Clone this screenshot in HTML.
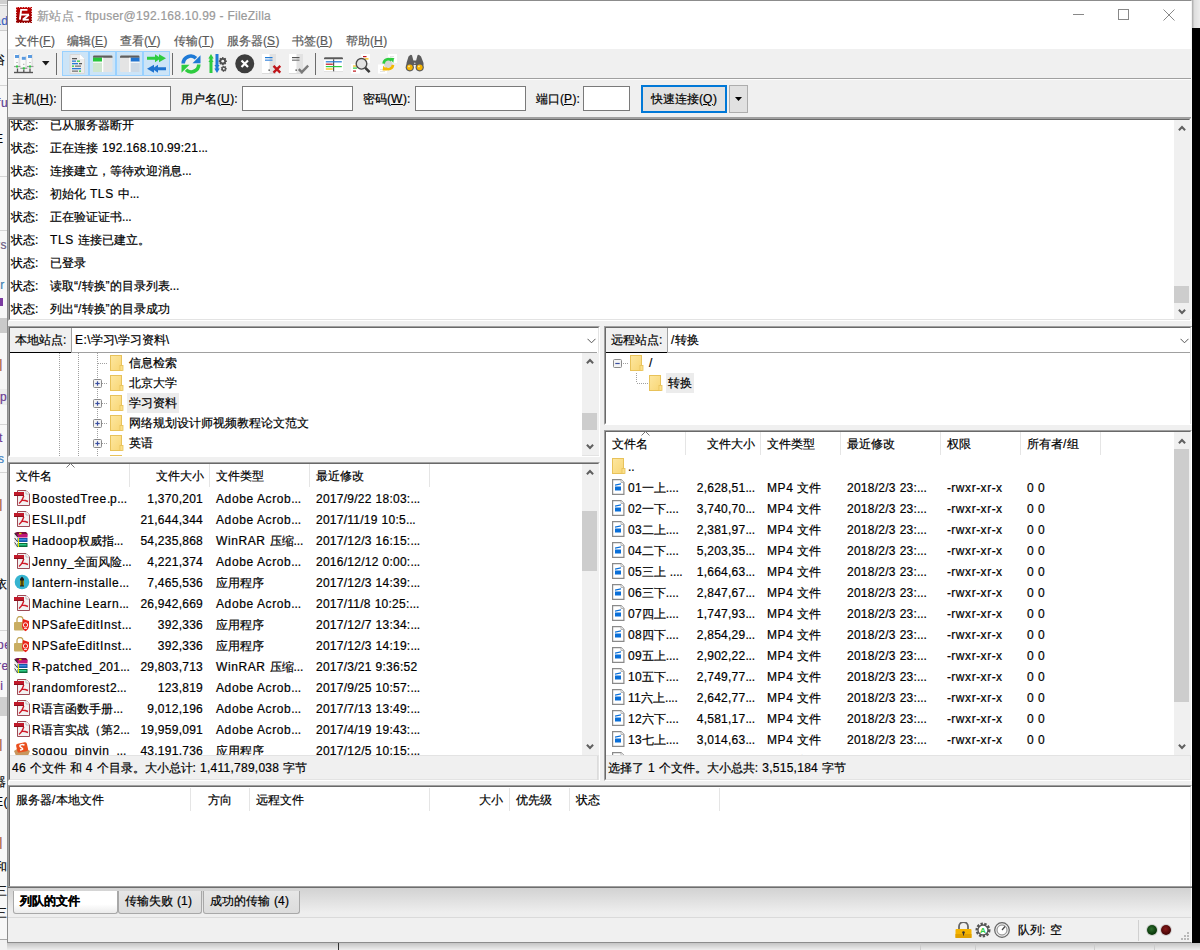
<!DOCTYPE html><html><head><meta charset="utf-8"><style>
*{box-sizing:border-box}
body{margin:0;width:1200px;height:950px;overflow:hidden;position:relative;background:#fafafa;font-family:"Liberation Sans",sans-serif;font-size:12px;color:#000}
.abs{position:absolute}
.L{letter-spacing:0.6px}.D{letter-spacing:0.25px}.S{letter-spacing:0.6px}.P{letter-spacing:-0.15px}
.t{position:absolute;white-space:nowrap;line-height:14px;-webkit-text-stroke-width:0.2px}
.sb{position:absolute;background:#f0f0f0}
.win{position:absolute;left:7px;top:0;width:1185px;height:943px;background:#f0f0f0;border:1px solid #8c8c8c;border-right-color:#f4f4f4}
</style></head><body>

<div class="abs" style="left:1192px;top:0;width:8px;height:28px;background:linear-gradient(90deg,#a8a8a8,#dedede 30%,#ececec)"></div>
<div class="abs" style="left:1192px;top:28px;width:8px;height:915px;background:#000"></div>
<div class="abs" style="left:0;top:943px;width:1200px;height:7px;background:linear-gradient(#c4c4c4,#eeeeee)"></div>
<div class="abs" style="left:338px;top:943px;width:1px;height:7px;background:#333"></div>
<div class="abs" style="left:920px;top:943px;width:1px;height:7px;background:#ccc"></div>
<div class="abs" style="left:975px;top:943px;width:1px;height:7px;background:#ccc"></div>
<div class="abs" style="left:1094px;top:943px;width:1px;height:7px;background:#ccc"></div>
<div class="abs" style="left:1154px;top:943px;width:1px;height:7px;background:#ccc"></div>
<div class="abs" style="left:0;top:0;width:7px;height:950px;overflow:hidden;background:#f7f7f7"><div class="abs" style="left:0;top:0px;width:7px;height:4px;background:#d0d0d0"></div><div class="abs" style="left:0;top:5px;width:7px;height:1px;background:#c8c8c8"></div><div class="abs" style="left:0;top:6px;width:7px;height:24px;background:#ebebeb"></div><div class="abs" style="left:0;top:30px;width:7px;height:1px;background:#cdcdcd"></div><div class="t" style="left:-6px;top:14px;color:#3a5fc0"><span class="L">ad</span></div><div class="t" style="left:-7px;top:53px;color:#000">浴</div><div class="abs" style="left:0;top:85px;width:7px;height:1px;background:#d4d4d4"></div><div class="t" style="left:-3px;top:96px;color:#5a3a90"><span class="L">fu</span></div><div class="t" style="left:-12px;top:132px;color:#000">~<span class="L">E</span></div><div class="abs" style="left:0;top:176px;width:7px;height:1px;background:#d4d4d4"></div><div class="abs" style="left:0;top:230px;width:7px;height:1px;background:#d4d4d4"></div><div class="t" style="left:-6px;top:238px;color:#6a5a80"><span class="L">ys</span></div><div class="t" style="left:-3px;top:278px;color:#4080b0"><span class="L">ir</span></div><div class="abs" style="left:0;top:298px;width:3px;height:8px;background:#7a3aa0"></div><div class="abs" style="left:0;top:318px;width:7px;height:15px;background:#cacaca"></div><div class="t" style="left:-5px;top:357px;color:#a05030"><span class="D">-</span>|</div><div class="abs" style="left:0;top:389px;width:7px;height:16px;background:#ececec"></div><div class="t" style="left:0px;top:390px;color:#6a3a90"><span class="L">p</span></div><div class="abs" style="left:0;top:424px;width:7px;height:1px;background:#d4d4d4"></div><div class="t" style="left:-1px;top:431px;color:#6a3a90"><span class="L">t</span></div><div class="t" style="left:-2px;top:452px;color:#4080c0"><span class="L">s</span></div><div class="abs" style="left:0;top:472px;width:7px;height:1px;background:#d4d4d4"></div><div class="t" style="left:-5px;top:497px;color:#a05030"><span class="D">-</span>|</div><div class="t" style="left:-8px;top:577px;color:#000"><span class="P">.</span>依</div><div class="abs" style="left:0;top:630px;width:7px;height:1px;background:#d4d4d4"></div><div class="t" style="left:-3px;top:638px;color:#6a3a90"><span class="L">pe</span></div><div class="t" style="left:-3px;top:659px;color:#6a3a90"><span class="L">re</span></div><div class="t" style="left:-3px;top:679px;color:#6a3a90"><span class="P">.</span><span class="L">i</span></div><div class="abs" style="left:0;top:697px;width:7px;height:19px;background:#cfcfcf"></div><div class="t" style="left:-5px;top:737px;color:#a05030"><span class="D">-</span>|</div><div class="t" style="left:-6px;top:775px;color:#000">器</div><div class="t" style="left:-5px;top:795px;color:#000"><span class="L">E</span>(</div><div class="t" style="left:-5px;top:835px;color:#a05030"><span class="D">-</span>|</div><div class="t" style="left:-5px;top:860px;color:#000">和</div><div class="t" style="left:-5px;top:884px;color:#000">三</div><div class="t" style="left:-5px;top:906px;color:#000">三</div><div class="abs" style="left:0;top:939px;width:7px;height:1px;background:#a8a8a8"></div><div class="abs" style="left:0;top:940px;width:7px;height:10px;background:#f2f2f2"></div></div>
<div class="win"></div>
<div class="abs" style="left:8px;top:1px;width:1183px;height:48px;background:#fff"></div>
<svg class="abs" style="left:16px;top:7px" width="16" height="16" viewBox="0 0 16 16"><defs><linearGradient id="fzg" x1="0" y1="0" x2="0" y2="1"><stop offset="0" stop-color="#c00000"/><stop offset="1" stop-color="#900000"/></linearGradient></defs><rect x="0" y="0" width="16" height="16" fill="url(#fzg)"/><rect x="0.5" y="0.5" width="15" height="15" fill="none" stroke="#f4d8d8" stroke-width="1" stroke-dasharray="1 1.6"/><path d="M3.9 12.6 L5.1 2.9 H11.4" stroke="#fff" stroke-width="1.9" fill="none"/><path d="M4.7 7.6 H13" stroke="#fff" stroke-width="1.8"/><path d="M12.8 7.8 L7.1 12.6" stroke="#fff" stroke-width="2.1"/><path d="M6.6 12.7 H12.8" stroke="#fff" stroke-width="1.8"/></svg>
<div class="t nowrap-ls" style="left:37px;top:9px;color:#9a9a9a;letter-spacing:0.25px">新站点 - ftpuser@192.168.10.99 - FileZilla</div>
<div class="abs" style="left:1073px;top:14px;width:11px;height:1px;background:#888"></div>
<div class="abs" style="left:1118px;top:9px;width:11px;height:11px;border:1px solid #888"></div>
<svg class="abs" style="left:1163px;top:9px" width="12" height="12"><path d="M0.5 0.5 L11.5 11.5 M11.5 0.5 L0.5 11.5" stroke="#888" stroke-width="1"/></svg>
<div class="t" style="left:15px;top:34px;color:#5a5a5a">文件(<u><span class="L">F</span></u>)</div>
<div class="t" style="left:67px;top:34px;color:#5a5a5a">编辑(<u><span class="L">E</span></u>)</div>
<div class="t" style="left:120px;top:34px;color:#5a5a5a">查看(<u><span class="L">V</span></u>)</div>
<div class="t" style="left:174px;top:34px;color:#5a5a5a">传输(<u><span class="L">T</span></u>)</div>
<div class="t" style="left:227px;top:34px;color:#5a5a5a">服务器(<u><span class="L">S</span></u>)</div>
<div class="t" style="left:292px;top:34px;color:#5a5a5a">书签(<u><span class="L">B</span></u>)</div>
<div class="t" style="left:346px;top:34px;color:#5a5a5a">帮助(<u><span class="L">H</span></u>)</div>
<div class="abs" style="left:8px;top:78px;width:1183px;height:1px;background:#a0a0a0"></div>
<div class="abs" style="left:8px;top:79px;width:1183px;height:1px;background:#fdfdfd"></div>
<svg class="abs" style="left:14px;top:54px" width="20" height="20" viewBox="0 0 20 20"><rect x="0" y="0" width="6" height="12.5" fill="#fbfbfb"/><rect x="4.5" y="0" width="1.5" height="12.5" fill="#e2e2e2"/><rect x="1" y="1" width="4" height="3" fill="#5b9be0"/><rect x="2.5" y="8" width="1" height="1" fill="#888"/><rect x="-0.5" y="11.9" width="7" height="1.2" fill="#9a9a9a"/><rect x="2" y="11.5" width="2" height="2" fill="#2ecc40"/><rect x="13" y="0" width="6" height="12.5" fill="#fbfbfb"/><rect x="17.5" y="0" width="1.5" height="12.5" fill="#e2e2e2"/><rect x="14" y="1" width="4" height="3" fill="#5b9be0"/><rect x="15.5" y="8" width="1" height="1" fill="#888"/><rect x="12.5" y="11.9" width="7" height="1.2" fill="#9a9a9a"/><rect x="15" y="11.5" width="2" height="2" fill="#2ecc40"/><rect x="6.8" y="1.8" width="6" height="12.5" fill="#fbfbfb"/><rect x="11.3" y="1.8" width="1.5" height="12.5" fill="#e2e2e2"/><rect x="7.8" y="2.8" width="4" height="3" fill="#5b9be0"/><rect x="9.3" y="9.8" width="1" height="1" fill="#888"/><rect x="6.3" y="13.700000000000001" width="7" height="1.2" fill="#9a9a9a"/><rect x="8.8" y="13.3" width="2" height="2" fill="#2ecc40"/><path d="M3.5 14.5 V18 M9.8 15.5 V18 M16 14.5 V18" stroke="#555" stroke-width="1.3"/><rect x="0" y="17.8" width="19" height="1.4" fill="#555"/></svg>
<svg class="abs" style="left:42px;top:61px" width="8" height="5"><path d="M0 0 H7.5 L3.75 4.5Z" fill="#1a1a1a"/></svg>
<div class="abs" style="left:56px;top:53px;width:1px;height:22px;background:#6b6b6b"></div>
<div class="abs" style="left:62px;top:51px;width:108px;height:25px;background:#cce4f7;border:1px solid #99d1ff"></div>
<div class="abs" style="left:88px;top:52px;width:2px;height:23px;background:#99d1ff"></div>
<div class="abs" style="left:115px;top:52px;width:2px;height:23px;background:#99d1ff"></div>
<div class="abs" style="left:142px;top:52px;width:2px;height:23px;background:#99d1ff"></div>
<svg class="abs" style="left:68px;top:54px" width="18" height="20" viewBox="0 0 18 20"><path d="M2 0.5 H12 L16.5 5 V19.5 H2Z" fill="#ececec" stroke="#d8d8d8"/><path d="M12 0.5 V5 H16.5" fill="#fff"/>
<rect x="4" y="4" width="5" height="1.3" fill="#555"/><rect x="4" y="6.5" width="4" height="1.3" fill="#2a7ad5"/><rect x="9" y="6.5" width="3" height="1.3" fill="#2ecc40"/>
<rect x="4" y="9" width="6" height="1.3" fill="#2a7ad5"/><rect x="11" y="9" width="3" height="1.3" fill="#555"/><rect x="4" y="11.5" width="2" height="1.3" fill="#2ecc40"/><rect x="7" y="11.5" width="6" height="1.3" fill="#777"/>
<rect x="4" y="14" width="9" height="1.3" fill="#2a7ad5"/><rect x="4" y="16.5" width="6" height="1.3" fill="#777"/><rect x="11" y="16.5" width="2" height="1.3" fill="#2ecc40"/></svg>
<svg class="abs" style="left:93px;top:55px" width="20" height="17" viewBox="0 0 20 17"><rect x="0" y="0.5" width="19.5" height="16.5" rx="1.2" fill="#e4e4e4"/><path d="M0 2.7 V1.7 Q0 0.5 1.2 0.5 H18.3 Q19.5 0.5 19.5 1.7 V2.7Z" fill="#5e5e5e"/><rect x="0" y="2.7" width="9" height="4" fill="#25c73a"/><rect x="0" y="6.7" width="9" height="1.1" fill="#fff"/><rect x="0" y="7.8" width="9" height="9.2" fill="#cfe6cf"/><rect x="9" y="2.7" width="1.3" height="14.3" fill="#fff"/></svg>
<svg class="abs" style="left:120px;top:55px" width="20" height="17" viewBox="0 0 20 17"><rect x="0" y="0.5" width="19.5" height="16.5" rx="1.2" fill="#e4e4e4"/><path d="M0 2.7 V1.7 Q0 0.5 1.2 0.5 H18.3 Q19.5 0.5 19.5 1.7 V2.7Z" fill="#5e5e5e"/><rect x="10.5" y="2.7" width="9" height="4" fill="#1f73d0"/><rect x="10.5" y="6.7" width="9" height="1.1" fill="#fff"/><rect x="10.5" y="7.8" width="9" height="9.2" fill="#cdd9e5"/><rect x="9.2" y="2.7" width="1.3" height="14.3" fill="#fff"/></svg>
<svg class="abs" style="left:147px;top:54px" width="20" height="19" viewBox="0 0 20 19"><path d="M0 2.8 H8 V0.3 L12 3 V0.3 L19 4.3 L12 8.3 V5.6 L8 8.3 V5.8 H0Z" fill="#2ecc40"/><path d="M19 13.2 H11 V10.7 L7 13.4 V10.7 L0 14.7 L7 18.7 V16 L11 18.7 V16.2 H19Z" fill="#1f73d0"/></svg>
<div class="abs" style="left:172px;top:53px;width:1px;height:22px;background:#6b6b6b"></div>
<svg class="abs" style="left:181px;top:54px" width="20" height="20" viewBox="0 0 20 20">
<path d="M2.2 9.5 A7.6 7.6 0 0 1 15 4.2" stroke="#1f7ad6" stroke-width="3.6" fill="none"/><path d="M11.5 9.3 L19.5 9.3 L19.5 1.3Z" fill="#1f7ad6"/>
<path d="M17.8 10.5 A7.6 7.6 0 0 1 5 15.8" stroke="#2ecc40" stroke-width="3.6" fill="none"/><path d="M8.5 10.7 L0.5 10.7 L0.5 18.7Z" fill="#2ecc40"/></svg>
<svg class="abs" style="left:208px;top:54px" width="20" height="20" viewBox="0 0 20 20"><path d="M1.5 19 V4.5 H0.3 L3 0 L5.7 4.5 H4.5 V19Z" fill="#2ecc40"/><path d="M0.3 8 L3 5 L5.7 8Z" fill="#2ecc40"/><path d="M7.5 0 V14.5 H6.3 L9 19 L11.7 14.5 H10.5 V0Z" fill="#1f7ad6"/><path d="M6.3 11 L9 14 L11.7 11Z" fill="#1f7ad6"/><polygon points="18.80,7.20 17.46,8.30 17.63,10.03 15.90,9.86 14.80,11.20 13.70,9.86 11.97,10.03 12.14,8.30 10.80,7.20 12.14,6.10 11.97,4.37 13.70,4.54 14.80,3.20 15.90,4.54 17.63,4.37 17.46,6.10" fill="#4a4a4a" stroke="#4a4a4a" stroke-width="0.8" stroke-linejoin="round"/><circle cx="14.8" cy="7.2" r="1.40" fill="#f0f0f0"/><polygon points="18.70,14.80 17.68,15.71 17.61,17.07 16.26,16.84 15.15,17.63 14.50,16.43 13.19,16.06 13.71,14.80 13.19,13.54 14.50,13.17 15.15,11.97 16.26,12.76 17.61,12.53 17.68,13.89" fill="#4a4a4a" stroke="#4a4a4a" stroke-width="0.6" stroke-linejoin="round"/><circle cx="15.8" cy="14.8" r="1.01" fill="#f0f0f0"/></svg>
<svg class="abs" style="left:235px;top:54px" width="20" height="20" viewBox="0 0 20 20"><circle cx="9.75" cy="9.75" r="9.5" fill="#3d3d3d"/><path d="M6.5 6.5 L13 13 M13 6.5 L6.5 13" stroke="#fff" stroke-width="2.2"/></svg>
<svg class="abs" style="left:262px;top:54px" width="20" height="20" viewBox="0 0 20 20"><rect x="0" y="0" width="14" height="19" fill="#ffffff"/><rect x="7.5" y="0" width="6.5" height="19" fill="#e2e2e2"/><rect x="0" y="19" width="14" height="0.8" fill="#d6d6d6"/><rect x="3" y="3" width="7.5" height="1.2" fill="#1f7ad6"/><rect x="3" y="5.5" width="7.5" height="1.4" fill="#5a9ae0"/><rect x="6.5" y="15.5" width="1.3" height="1.3" fill="#333"/><path d="M11.5 11.8 L18.3 18.6 M18.3 11.8 L11.5 18.6" stroke="#c0161b" stroke-width="2.4"/></svg>
<svg class="abs" style="left:289px;top:54px" width="20" height="20" viewBox="0 0 20 20"><rect x="0" y="0" width="14" height="19" fill="#ffffff"/><rect x="7.5" y="0" width="6.5" height="19" fill="#e2e2e2"/><rect x="0" y="19" width="14" height="0.8" fill="#d6d6d6"/><rect x="3" y="3" width="7.5" height="1.2" fill="#555"/><rect x="3" y="5.5" width="7.5" height="1.4" fill="#888"/><rect x="6.5" y="15.5" width="1.3" height="1.3" fill="#333"/><path d="M9.8 15.2 L12.8 18.2 L19.2 11.6" stroke="#7a7a7a" stroke-width="2.4" fill="none"/></svg>
<div class="abs" style="left:315px;top:53px;width:1px;height:22px;background:#6b6b6b"></div>
<svg class="abs" style="left:324px;top:57px" width="20" height="15" viewBox="0 0 20 15"><rect x="0" y="0.5" width="19" height="14" fill="#ffffff"/><rect x="0" y="14" width="19" height="0.8" fill="#dcdcdc"/><path d="M0 2.3 V1.5 Q0 0.3 1.2 0.3 H17.8 Q19 0.3 19 1.5 V2.3Z" fill="#5a5a5a"/>
<rect x="9" y="2.3" width="1.2" height="12" fill="#555"/><rect x="1.8" y="4.2" width="16" height="1.2" fill="#1f7ad6"/><rect x="1.8" y="6.6" width="7" height="1.2" fill="#c0161b"/><rect x="1.8" y="9" width="16" height="1.2" fill="#2ecc40"/><rect x="1.8" y="11.4" width="7" height="1.2" fill="#f5b800"/></svg>
<svg class="abs" style="left:351px;top:54px" width="20" height="20" viewBox="0 0 20 20"><rect x="10" y="0" width="9" height="9" fill="#fff"/><rect x="12" y="2" width="3.5" height="1.2" fill="#c0161b"/><rect x="13.5" y="4.3" width="4" height="1.2" fill="#f5b800"/>
<rect x="0" y="10" width="9" height="9.5" fill="#fff"/><rect x="2" y="11.5" width="3" height="1.1" fill="#f5b800"/><rect x="2" y="13.5" width="4" height="1.2" fill="#2ecc40"/><rect x="2" y="16.5" width="3" height="1.2" fill="#c0161b"/>
<circle cx="10.5" cy="9.8" r="5.3" fill="#e2e2e2" stroke="#4a4a4a" stroke-width="1.4"/><path d="M14.3 13.8 L18.6 18.2" stroke="#3a3a3a" stroke-width="2.6"/></svg>
<svg class="abs" style="left:378px;top:54px" width="20" height="20" viewBox="0 0 20 20"><rect x="10" y="0" width="9" height="9" fill="#fff"/><rect x="12" y="2" width="4" height="0.8" fill="#ddd"/><rect x="12" y="4" width="5" height="0.8" fill="#ddd"/><rect x="0" y="10.5" width="9" height="9" fill="#fff"/><rect x="2" y="15" width="4" height="0.8" fill="#ddd"/><rect x="2" y="17" width="5" height="0.8" fill="#ddd"/>
<circle cx="10.3" cy="10.2" r="4.3" fill="#d6d6d6"/>
<path d="M5.6 9.6 A4.7 4.7 0 0 1 13.6 6.6" stroke="#2ecc40" stroke-width="2.6" fill="none"/><path d="M11.6 3.8 L16 4 L15.3 9Z" fill="#2ecc40"/>
<path d="M15 10.8 A4.7 4.7 0 0 1 7 13.8" stroke="#f5b800" stroke-width="2.6" fill="none"/><path d="M9 16.6 L4.6 16.4 L5.3 11.4Z" fill="#f5b800"/></svg>
<svg class="abs" style="left:405px;top:54px" width="20" height="19" viewBox="0 0 20 19"><path d="M5 1.2 Q5.8 0.4 7 1.2 L8.5 7 V11 H1.5 V9 L3.5 2.5Z" fill="#5c5c5c"/><path d="M12.5 1.2 Q13.7 0.4 14.5 1.2 L16 2.5 L18.5 9 V11 H11 V7Z" fill="#5c5c5c"/><rect x="8" y="6.5" width="3.5" height="4.5" fill="#5c5c5c"/><circle cx="9.75" cy="9.4" r="0.8" fill="#bbb"/>
<circle cx="4.8" cy="13.3" r="4.1" fill="#5c5c5c"/><circle cx="14.7" cy="13.3" r="4.1" fill="#5c5c5c"/><circle cx="4.8" cy="13.3" r="2.9" fill="#f5b400"/><circle cx="14.7" cy="13.3" r="2.9" fill="#f5b400"/><circle cx="4" cy="12.4" r="0.9" fill="#ffe9a0"/><circle cx="13.9" cy="12.4" r="0.9" fill="#ffe9a0"/></svg>
<div class="abs" style="left:8px;top:117px;width:1183px;height:1px;background:#a0a0a0"></div>
<div class="t" style="left:12px;top:92px">主机(<u><span class="L">H</span></u>)<span class="D">:</span></div>
<div class="abs" style="left:61px;top:86px;width:110px;height:25px;background:#fff;border:1px solid #7a7a7a"></div>
<div class="t" style="left:181px;top:92px">用户名(<u><span class="L">U</span></u>)<span class="D">:</span></div>
<div class="abs" style="left:242px;top:86px;width:111px;height:25px;background:#fff;border:1px solid #7a7a7a"></div>
<div class="t" style="left:363px;top:92px">密码(<u><span class="L">W</span></u>)<span class="D">:</span></div>
<div class="abs" style="left:415px;top:86px;width:111px;height:25px;background:#fff;border:1px solid #7a7a7a"></div>
<div class="t" style="left:536px;top:92px">端口(<u><span class="L">P</span></u>)<span class="D">:</span></div>
<div class="abs" style="left:583px;top:86px;width:47px;height:25px;background:#fff;border:1px solid #7a7a7a"></div>
<div class="abs" style="left:641px;top:85px;width:86px;height:28px;background:#e1e1e1;border:2px solid #0078d7"></div>
<div class="t" style="left:651px;top:92px">快速连接(<u><span class="L">Q</span></u>)</div>
<div class="abs" style="left:729px;top:85px;width:19px;height:28px;background:#e1e1e1;border:1px solid #adadad"></div>
<svg class="abs" style="left:735px;top:97px" width="8" height="5"><path d="M0 0 H7 L3.5 4Z" fill="#000"/></svg>
<div class="abs" style="left:8px;top:118px;width:1183px;height:203px;background:#fff;border-top:1px solid #a0a0a0;border-left:1px solid #a0a0a0;border-right:1px solid #fff;border-bottom:1px solid #fff"><div style="position:absolute;left:0;top:0;right:0;bottom:0;border-top:1px solid #696969;border-left:1px solid #696969;border-right:1px solid #e3e3e3;border-bottom:1px solid #e3e3e3"></div></div>
<div class="abs" style="left:10px;top:120px;width:1164px;height:199px;overflow:hidden">
<div class="t" style="left:1px;top:-2px">状态<span class="D">:</span></div><div class="t" style="left:40px;top:-2px">已从服务器断开</div>
<div class="t" style="left:1px;top:21px">状态<span class="D">:</span></div><div class="t" style="left:40px;top:21px">正在连接<span class="S"> </span><span class="D">192</span><span class="P">.</span><span class="D">168</span><span class="P">.</span><span class="D">10</span><span class="P">.</span><span class="D">99:21</span><span class="P">...</span></div>
<div class="t" style="left:1px;top:44px">状态<span class="D">:</span></div><div class="t" style="left:40px;top:44px">连接建立，等待欢迎消息<span class="P">...</span></div>
<div class="t" style="left:1px;top:67px">状态<span class="D">:</span></div><div class="t" style="left:40px;top:67px">初始化<span class="S"> </span><span class="L">TLS</span><span class="S"> </span>中<span class="P">...</span></div>
<div class="t" style="left:1px;top:90px">状态<span class="D">:</span></div><div class="t" style="left:40px;top:90px">正在验证证书<span class="P">...</span></div>
<div class="t" style="left:1px;top:113px">状态<span class="D">:</span></div><div class="t" style="left:40px;top:113px"><span class="L">TLS</span><span class="S"> </span>连接已建立。</div>
<div class="t" style="left:1px;top:136px">状态<span class="D">:</span></div><div class="t" style="left:40px;top:136px">已登录</div>
<div class="t" style="left:1px;top:159px">状态<span class="D">:</span></div><div class="t" style="left:40px;top:159px">读取“<span class="D">/</span>转换”的目录列表<span class="P">...</span></div>
<div class="t" style="left:1px;top:182px">状态<span class="D">:</span></div><div class="t" style="left:40px;top:182px">列出“<span class="D">/</span>转换”的目录成功</div>
</div>
<div class="abs" style="left:1174px;top:120px;width:17px;height:199px;background:#f0f0f0"></div>
<svg class="abs" style="left:1178px;top:124px" width="8" height="8"><path d="M0.9 6.3 L4 3 L7.1 6.3" stroke="#606060" stroke-width="2" fill="none"/></svg>
<svg class="abs" style="left:1178px;top:308px" width="8" height="8"><path d="M0.9 1.7 L4 5 L7.1 1.7" stroke="#606060" stroke-width="2" fill="none"/></svg>
<div class="abs" style="left:1174px;top:286px;width:15px;height:17px;background:#cdcdcd"></div>
<div class="abs" style="left:8px;top:326px;width:592px;height:131px;background:#fff;border-top:1px solid #a0a0a0;border-left:1px solid #a0a0a0;border-right:1px solid #fff;border-bottom:1px solid #fff"><div style="position:absolute;left:0;top:0;right:0;bottom:0;border-top:1px solid #696969;border-left:1px solid #696969;border-right:1px solid #e3e3e3;border-bottom:1px solid #e3e3e3"></div></div>
<div class="abs" style="left:8px;top:326px;width:591px;height:1px;background:#a0a0a0"></div>
<div class="abs" style="left:10px;top:328px;width:61px;height:24px;background:#f0f0f0"></div>
<div class="abs" style="left:71px;top:328px;width:1px;height:24px;background:#a0a0a0"></div>
<div class="abs" style="left:72px;top:328px;width:525px;height:24px;background:#fff"></div>
<div class="t" style="left:15px;top:333px">本地站点<span class="D">:</span></div>
<div class="t" style="left:75px;top:333px"><span class="L">E</span><span class="D">:</span>\学习\学习资料\</div>
<svg class="abs" style="left:587px;top:338px" width="9" height="6"><path d="M0.5 0.8 L4.5 4.8 L8.5 0.8" stroke="#555" stroke-width="1" fill="none"/></svg>
<div class="abs" style="left:10px;top:352px;width:61px;height:1px;background:#000"></div>
<div class="abs" style="left:71px;top:352px;width:526px;height:1px;background:#a0a0a0"></div>
<div class="abs" style="left:10px;top:353px;width:572px;height:103px;overflow:hidden;background:#fff">
<div class="abs" style="left:49px;top:0px;width:1px;height:103px;background:repeating-linear-gradient(#a0a0a0 0 1px,transparent 1px 2px)"></div><div class="abs" style="left:68px;top:0px;width:1px;height:103px;background:repeating-linear-gradient(#a0a0a0 0 1px,transparent 1px 2px)"></div><div class="abs" style="left:87px;top:0px;width:1px;height:103px;background:repeating-linear-gradient(#a0a0a0 0 1px,transparent 1px 2px)"></div><svg class="abs" style="left:100px;top:2px" width="14" height="16" viewBox="0 0 14 16"><defs><linearGradient id="fg" x1="0" y1="0" x2="1" y2="1"><stop offset="0" stop-color="#fde7a0"/><stop offset="1" stop-color="#f8d675"/></linearGradient></defs><rect x="0.5" y="0.5" width="11" height="15" fill="url(#fg)" stroke="#e8c25a"/><rect x="10" y="10.5" width="3" height="5" fill="#fbe08a" stroke="#e8c25a" stroke-width="0.8"/></svg><div class="abs" style="left:88px;top:10px;width:10px;height:1px;background:repeating-linear-gradient(90deg,#a0a0a0 0 1px,transparent 1px 2px)"></div><div class="t" style="left:119px;top:3px">信息检索</div><svg class="abs" style="left:100px;top:22px" width="14" height="16" viewBox="0 0 14 16"><defs><linearGradient id="fg" x1="0" y1="0" x2="1" y2="1"><stop offset="0" stop-color="#fde7a0"/><stop offset="1" stop-color="#f8d675"/></linearGradient></defs><rect x="0.5" y="0.5" width="11" height="15" fill="url(#fg)" stroke="#e8c25a"/><rect x="10" y="10.5" width="3" height="5" fill="#fbe08a" stroke="#e8c25a" stroke-width="0.8"/></svg><svg class="abs" style="left:83px;top:26px" width="9" height="9" viewBox="0 0 9 9"><rect x="0.5" y="0.5" width="8" height="8" rx="1" fill="#f4f4f4" stroke="#8a8a8a"/><path d="M2.3 4.5 H6.7" stroke="#3b4fa0" stroke-width="1.2"/><path d="M4.5 2.3 V6.7" stroke="#3b4fa0" stroke-width="1.2"/></svg><div class="abs" style="left:92px;top:30px;width:6px;height:1px;background:repeating-linear-gradient(90deg,#a0a0a0 0 1px,transparent 1px 2px)"></div><div class="t" style="left:119px;top:23px">北京大学</div><svg class="abs" style="left:100px;top:42px" width="14" height="16" viewBox="0 0 14 16"><defs><linearGradient id="fg" x1="0" y1="0" x2="1" y2="1"><stop offset="0" stop-color="#fde7a0"/><stop offset="1" stop-color="#f8d675"/></linearGradient></defs><rect x="0.5" y="0.5" width="11" height="15" fill="url(#fg)" stroke="#e8c25a"/><rect x="10" y="10.5" width="3" height="5" fill="#fbe08a" stroke="#e8c25a" stroke-width="0.8"/></svg><svg class="abs" style="left:83px;top:46px" width="9" height="9" viewBox="0 0 9 9"><rect x="0.5" y="0.5" width="8" height="8" rx="1" fill="#f4f4f4" stroke="#8a8a8a"/><path d="M2.3 4.5 H6.7" stroke="#3b4fa0" stroke-width="1.2"/><path d="M4.5 2.3 V6.7" stroke="#3b4fa0" stroke-width="1.2"/></svg><div class="abs" style="left:92px;top:50px;width:6px;height:1px;background:repeating-linear-gradient(90deg,#a0a0a0 0 1px,transparent 1px 2px)"></div><div class="abs" style="left:117px;top:40px;width:52px;height:20px;background:#ececec"></div><div class="t" style="left:119px;top:43px">学习资料</div><svg class="abs" style="left:100px;top:62px" width="14" height="16" viewBox="0 0 14 16"><defs><linearGradient id="fg" x1="0" y1="0" x2="1" y2="1"><stop offset="0" stop-color="#fde7a0"/><stop offset="1" stop-color="#f8d675"/></linearGradient></defs><rect x="0.5" y="0.5" width="11" height="15" fill="url(#fg)" stroke="#e8c25a"/><rect x="10" y="10.5" width="3" height="5" fill="#fbe08a" stroke="#e8c25a" stroke-width="0.8"/></svg><svg class="abs" style="left:83px;top:66px" width="9" height="9" viewBox="0 0 9 9"><rect x="0.5" y="0.5" width="8" height="8" rx="1" fill="#f4f4f4" stroke="#8a8a8a"/><path d="M2.3 4.5 H6.7" stroke="#3b4fa0" stroke-width="1.2"/><path d="M4.5 2.3 V6.7" stroke="#3b4fa0" stroke-width="1.2"/></svg><div class="abs" style="left:92px;top:70px;width:6px;height:1px;background:repeating-linear-gradient(90deg,#a0a0a0 0 1px,transparent 1px 2px)"></div><div class="t" style="left:119px;top:63px">网络规划设计师视频教程论文范文</div><svg class="abs" style="left:100px;top:82px" width="14" height="16" viewBox="0 0 14 16"><defs><linearGradient id="fg" x1="0" y1="0" x2="1" y2="1"><stop offset="0" stop-color="#fde7a0"/><stop offset="1" stop-color="#f8d675"/></linearGradient></defs><rect x="0.5" y="0.5" width="11" height="15" fill="url(#fg)" stroke="#e8c25a"/><rect x="10" y="10.5" width="3" height="5" fill="#fbe08a" stroke="#e8c25a" stroke-width="0.8"/></svg><svg class="abs" style="left:83px;top:86px" width="9" height="9" viewBox="0 0 9 9"><rect x="0.5" y="0.5" width="8" height="8" rx="1" fill="#f4f4f4" stroke="#8a8a8a"/><path d="M2.3 4.5 H6.7" stroke="#3b4fa0" stroke-width="1.2"/><path d="M4.5 2.3 V6.7" stroke="#3b4fa0" stroke-width="1.2"/></svg><div class="abs" style="left:92px;top:90px;width:6px;height:1px;background:repeating-linear-gradient(90deg,#a0a0a0 0 1px,transparent 1px 2px)"></div><div class="t" style="left:119px;top:83px">英语</div><svg class="abs" style="left:100px;top:102px" width="14" height="16" viewBox="0 0 14 16"><defs><linearGradient id="fg" x1="0" y1="0" x2="1" y2="1"><stop offset="0" stop-color="#fde7a0"/><stop offset="1" stop-color="#f8d675"/></linearGradient></defs><rect x="0.5" y="0.5" width="11" height="15" fill="url(#fg)" stroke="#e8c25a"/><rect x="10" y="10.5" width="3" height="5" fill="#fbe08a" stroke="#e8c25a" stroke-width="0.8"/></svg>
</div>
<div class="abs" style="left:582px;top:353px;width:17px;height:102px;background:#f0f0f0"></div>
<svg class="abs" style="left:586px;top:357px" width="8" height="8"><path d="M0.9 6.3 L4 3 L7.1 6.3" stroke="#606060" stroke-width="2" fill="none"/></svg>
<svg class="abs" style="left:586px;top:443px" width="8" height="8"><path d="M0.9 1.7 L4 5 L7.1 1.7" stroke="#606060" stroke-width="2" fill="none"/></svg>
<div class="abs" style="left:582px;top:413px;width:15px;height:17px;background:#cdcdcd"></div>
<div class="abs" style="left:604px;top:326px;width:588px;height:99px;background:#fff;border-top:1px solid #a0a0a0;border-left:1px solid #a0a0a0;border-right:1px solid #fff;border-bottom:1px solid #fff"><div style="position:absolute;left:0;top:0;right:0;bottom:0;border-top:1px solid #696969;border-left:1px solid #696969;border-right:1px solid #e3e3e3;border-bottom:1px solid #e3e3e3"></div></div>
<div class="abs" style="left:604px;top:326px;width:588px;height:1px;background:#a0a0a0"></div>
<div class="abs" style="left:606px;top:328px;width:61px;height:24px;background:#f0f0f0"></div>
<div class="abs" style="left:667px;top:328px;width:1px;height:24px;background:#a0a0a0"></div>
<div class="abs" style="left:668px;top:328px;width:522px;height:24px;background:#fff"></div>
<div class="t" style="left:611px;top:333px">远程站点<span class="D">:</span></div>
<div class="t" style="left:671px;top:333px"><span class="D">/</span>转换</div>
<svg class="abs" style="left:1180px;top:338px" width="9" height="6"><path d="M0.5 0.8 L4.5 4.8 L8.5 0.8" stroke="#555" stroke-width="1" fill="none"/></svg>
<div class="abs" style="left:606px;top:352px;width:61px;height:1px;background:#000"></div>
<div class="abs" style="left:667px;top:352px;width:523px;height:1px;background:#a0a0a0"></div>
<div class="abs" style="left:606px;top:353px;width:584px;height:71px;overflow:hidden;background:#fff">
<svg class="abs" style="left:7px;top:6px" width="9" height="9" viewBox="0 0 9 9"><rect x="0.5" y="0.5" width="8" height="8" rx="1" fill="#f4f4f4" stroke="#8a8a8a"/><path d="M2.3 4.5 H6.7" stroke="#3b4fa0" stroke-width="1.2"/></svg><div class="abs" style="left:17px;top:10px;width:6px;height:1px;background:repeating-linear-gradient(90deg,#a0a0a0 0 1px,transparent 1px 2px)"></div><svg class="abs" style="left:24px;top:2px" width="14" height="16" viewBox="0 0 14 16"><defs><linearGradient id="fg" x1="0" y1="0" x2="1" y2="1"><stop offset="0" stop-color="#fde7a0"/><stop offset="1" stop-color="#f8d675"/></linearGradient></defs><rect x="0.5" y="0.5" width="11" height="15" fill="url(#fg)" stroke="#e8c25a"/><rect x="10" y="10.5" width="3" height="5" fill="#fbe08a" stroke="#e8c25a" stroke-width="0.8"/></svg><div class="t" style="left:43px;top:3px"><span class="D">/</span></div><div class="abs" style="left:30px;top:20px;width:1px;height:10px;background:repeating-linear-gradient(#a0a0a0 0 1px,transparent 1px 2px)"></div><div class="abs" style="left:31px;top:30px;width:11px;height:1px;background:repeating-linear-gradient(90deg,#a0a0a0 0 1px,transparent 1px 2px)"></div><svg class="abs" style="left:43px;top:22px" width="14" height="16" viewBox="0 0 14 16"><defs><linearGradient id="fg" x1="0" y1="0" x2="1" y2="1"><stop offset="0" stop-color="#fde7a0"/><stop offset="1" stop-color="#f8d675"/></linearGradient></defs><rect x="0.5" y="0.5" width="11" height="15" fill="url(#fg)" stroke="#e8c25a"/><rect x="10" y="10.5" width="3" height="5" fill="#fbe08a" stroke="#e8c25a" stroke-width="0.8"/></svg><div class="abs" style="left:60px;top:20px;width:28px;height:20px;background:#ececec"></div><div class="t" style="left:62px;top:23px">转换</div>
</div>
<div class="abs" style="left:8px;top:462px;width:592px;height:319px;background:#f0f0f0;border-top:1px solid #a0a0a0;border-left:1px solid #a0a0a0;border-right:1px solid #fff;border-bottom:1px solid #fff"><div style="position:absolute;left:0;top:0;right:0;bottom:0;border-top:1px solid #696969;border-left:1px solid #696969;border-right:1px solid #e3e3e3;border-bottom:1px solid #e3e3e3"></div></div>
<div class="abs" style="left:10px;top:464px;width:572px;height:291px;background:#fff"></div>
<div class="abs" style="left:129px;top:464px;width:1px;height:23px;background:#e5e5e5"></div>
<div class="abs" style="left:209px;top:464px;width:1px;height:23px;background:#e5e5e5"></div>
<div class="abs" style="left:309px;top:464px;width:1px;height:23px;background:#e5e5e5"></div>
<div class="abs" style="left:429px;top:464px;width:1px;height:23px;background:#e5e5e5"></div>
<svg class="abs" style="left:66px;top:463px" width="9" height="5"><path d="M0.5 4.5 L4.5 0.5 L8.5 4.5" stroke="#777" stroke-width="1" fill="none"/></svg>
<div class="t" style="left:16px;top:469px;">文件名</div>
<div class="t" style="right:996px;top:469px;text-align:right;">文件大小</div>
<div class="t" style="left:216px;top:469px;">文件类型</div>
<div class="t" style="left:316px;top:469px;">最近修改</div>
<div class="abs" style="left:10px;top:487px;width:572px;height:268px;overflow:hidden">
<svg class="abs" style="left:4px;top:3px" width="16" height="16" viewBox="0 0 16 16"><path d="M3.5 0.5 H12 L15.5 4 V15.5 H3.5Z" fill="#f2f2f2" stroke="#9b4a55"/><path d="M12 0.5 V4 H15.5" fill="#fff" stroke="#aaa" stroke-width="0.7"/><rect x="0" y="2" width="10" height="4" fill="#c0192a"/><rect x="0" y="5" width="10" height="1" fill="#8e0f1c"/>
<path d="M9.8 6 C9 9 7 12 5 13.5 M7 10.5 C9 10 11.5 10.5 14 11.5" stroke="#d01a28" stroke-width="1.4" fill="none"/></svg>
<div class="t" style="left:22px;top:5px"><span class="L">BoostedTree</span><span class="P">.</span><span class="L">p</span><span class="P">...</span></div>
<div class="t" style="left:90px;width:103px;text-align:right;top:5px"><span class="D">1,370,201</span></div>
<div class="t" style="left:206px;top:5px"><span class="L">Adobe</span><span class="S"> </span><span class="L">Acrob</span><span class="P">...</span></div>
<div class="t" style="left:306px;top:5px"><span class="D">2017/9/22</span><span class="S"> </span><span class="D">18:03:</span><span class="P">...</span></div>
<svg class="abs" style="left:4px;top:24px" width="16" height="16" viewBox="0 0 16 16"><path d="M3.5 0.5 H12 L15.5 4 V15.5 H3.5Z" fill="#f2f2f2" stroke="#9b4a55"/><path d="M12 0.5 V4 H15.5" fill="#fff" stroke="#aaa" stroke-width="0.7"/><rect x="0" y="2" width="10" height="4" fill="#c0192a"/><rect x="0" y="5" width="10" height="1" fill="#8e0f1c"/>
<path d="M9.8 6 C9 9 7 12 5 13.5 M7 10.5 C9 10 11.5 10.5 14 11.5" stroke="#d01a28" stroke-width="1.4" fill="none"/></svg>
<div class="t" style="left:22px;top:26px"><span class="L">ESLII</span><span class="P">.</span><span class="L">pdf</span></div>
<div class="t" style="left:90px;width:103px;text-align:right;top:26px"><span class="D">21,644,344</span></div>
<div class="t" style="left:206px;top:26px"><span class="L">Adobe</span><span class="S"> </span><span class="L">Acrob</span><span class="P">...</span></div>
<div class="t" style="left:306px;top:26px"><span class="D">2017/11/19</span><span class="S"> </span><span class="D">10:5</span><span class="P">...</span></div>
<svg class="abs" style="left:4px;top:45px" width="16" height="16" viewBox="0 0 16 16"><path d="M0.5 1 L3 0 H12 L13.5 1.5 L13 5 H3.5Z" fill="#7a0f3c"/><rect x="3.5" y="2" width="10" height="3.5" fill="#c1177a"/><rect x="5" y="0.8" width="2.5" height="1.5" fill="#d6d000"/>
<path d="M0.5 1.5 L3.5 5 M0.5 6 L3.5 10 M0.5 10.5 L3.5 15" stroke="#333" stroke-width="1.2"/><path d="M0 1.5 L0 5 L3.5 5.5Z M0 6 V10 L3.5 10.5Z M0 10.5 V14 L3.5 15Z" fill="#eee"/>
<rect x="3.5" y="6" width="10" height="4" fill="#1455a8"/><rect x="4.5" y="7" width="8" height="1.5" fill="#3d8de0"/><rect x="3.5" y="11" width="10" height="4" fill="#0c6b3a"/><rect x="4.5" y="12" width="8" height="1.5" fill="#2fd08a"/><rect x="4" y="6" width="1" height="9" fill="#e8e000"/></svg>
<div class="t" style="left:22px;top:47px"><span class="L">Hadoop</span>权威指<span class="P">...</span></div>
<div class="t" style="left:90px;width:103px;text-align:right;top:47px"><span class="D">54,235,868</span></div>
<div class="t" style="left:206px;top:47px"><span class="L">WinRAR</span><span class="S"> </span>压缩<span class="P">...</span></div>
<div class="t" style="left:306px;top:47px"><span class="D">2017/12/3</span><span class="S"> </span><span class="D">16:15:</span><span class="P">...</span></div>
<svg class="abs" style="left:4px;top:66px" width="16" height="16" viewBox="0 0 16 16"><path d="M3.5 0.5 H12 L15.5 4 V15.5 H3.5Z" fill="#f2f2f2" stroke="#9b4a55"/><path d="M12 0.5 V4 H15.5" fill="#fff" stroke="#aaa" stroke-width="0.7"/><rect x="0" y="2" width="10" height="4" fill="#c0192a"/><rect x="0" y="5" width="10" height="1" fill="#8e0f1c"/>
<path d="M9.8 6 C9 9 7 12 5 13.5 M7 10.5 C9 10 11.5 10.5 14 11.5" stroke="#d01a28" stroke-width="1.4" fill="none"/></svg>
<div class="t" style="left:22px;top:68px"><span class="L">Jenny</span><span class="D">_</span>全面风险<span class="P">...</span></div>
<div class="t" style="left:90px;width:103px;text-align:right;top:68px"><span class="D">4,221,374</span></div>
<div class="t" style="left:206px;top:68px"><span class="L">Adobe</span><span class="S"> </span><span class="L">Acrob</span><span class="P">...</span></div>
<div class="t" style="left:306px;top:68px"><span class="D">2016/12/12</span><span class="S"> </span><span class="D">0:00:</span><span class="P">...</span></div>
<svg class="abs" style="left:4px;top:87px" width="16" height="16" viewBox="0 0 16 16"><circle cx="8" cy="8" r="7.3" fill="#36b4d0"/><path d="M8 2.5 L10 5 V12.5 H6 V5Z" fill="#1a1a1a"/><path d="M6.8 6.5 V11.5 M9.2 6.5 V11.5" stroke="#f4d800" stroke-width="0.8"/></svg>
<div class="t" style="left:22px;top:89px"><span class="L">lantern</span><span class="D">-</span><span class="L">installe</span><span class="P">...</span></div>
<div class="t" style="left:90px;width:103px;text-align:right;top:89px"><span class="D">7,465,536</span></div>
<div class="t" style="left:206px;top:89px">应用程序</div>
<div class="t" style="left:306px;top:89px"><span class="D">2017/12/3</span><span class="S"> </span><span class="D">14:39:</span><span class="P">...</span></div>
<svg class="abs" style="left:4px;top:108px" width="16" height="16" viewBox="0 0 16 16"><path d="M3.5 0.5 H12 L15.5 4 V15.5 H3.5Z" fill="#f2f2f2" stroke="#9b4a55"/><path d="M12 0.5 V4 H15.5" fill="#fff" stroke="#aaa" stroke-width="0.7"/><rect x="0" y="2" width="10" height="4" fill="#c0192a"/><rect x="0" y="5" width="10" height="1" fill="#8e0f1c"/>
<path d="M9.8 6 C9 9 7 12 5 13.5 M7 10.5 C9 10 11.5 10.5 14 11.5" stroke="#d01a28" stroke-width="1.4" fill="none"/></svg>
<div class="t" style="left:22px;top:110px"><span class="L">Machine</span><span class="S"> </span><span class="L">Learn</span><span class="P">...</span></div>
<div class="t" style="left:90px;width:103px;text-align:right;top:110px"><span class="D">26,942,669</span></div>
<div class="t" style="left:206px;top:110px"><span class="L">Adobe</span><span class="S"> </span><span class="L">Acrob</span><span class="P">...</span></div>
<div class="t" style="left:306px;top:110px"><span class="D">2017/11/8</span><span class="S"> </span><span class="D">10:25:</span><span class="P">...</span></div>
<svg class="abs" style="left:4px;top:129px" width="16" height="16" viewBox="0 0 16 16"><path d="M3 6 V3.5 A3 3 0 0 1 9 3.5 V6" stroke="#c2a75a" stroke-width="1.3" fill="none"/><rect x="0" y="6" width="10" height="8.5" rx="1" fill="#c9ad62"/><path d="M9 3 L15 5 V10 C15 13 12 15 11.5 15.3 C11 15 8 13 8 10Z" fill="#e8241a"/><circle cx="11.5" cy="9" r="2.2" fill="none" stroke="#fff" stroke-width="0.9"/><rect x="10" y="12" width="3" height="0.8" fill="#fff"/></svg>
<div class="t" style="left:22px;top:131px"><span class="L">NPSafeEditInst</span><span class="P">...</span></div>
<div class="t" style="left:90px;width:103px;text-align:right;top:131px"><span class="D">392,336</span></div>
<div class="t" style="left:206px;top:131px">应用程序</div>
<div class="t" style="left:306px;top:131px"><span class="D">2017/12/7</span><span class="S"> </span><span class="D">13:34:</span><span class="P">...</span></div>
<svg class="abs" style="left:4px;top:150px" width="16" height="16" viewBox="0 0 16 16"><path d="M3 6 V3.5 A3 3 0 0 1 9 3.5 V6" stroke="#c2a75a" stroke-width="1.3" fill="none"/><rect x="0" y="6" width="10" height="8.5" rx="1" fill="#c9ad62"/><path d="M9 3 L15 5 V10 C15 13 12 15 11.5 15.3 C11 15 8 13 8 10Z" fill="#e8241a"/><circle cx="11.5" cy="9" r="2.2" fill="none" stroke="#fff" stroke-width="0.9"/><rect x="10" y="12" width="3" height="0.8" fill="#fff"/></svg>
<div class="t" style="left:22px;top:152px"><span class="L">NPSafeEditInst</span><span class="P">...</span></div>
<div class="t" style="left:90px;width:103px;text-align:right;top:152px"><span class="D">392,336</span></div>
<div class="t" style="left:206px;top:152px">应用程序</div>
<div class="t" style="left:306px;top:152px"><span class="D">2017/12/3</span><span class="S"> </span><span class="D">14:19:</span><span class="P">...</span></div>
<svg class="abs" style="left:4px;top:171px" width="16" height="16" viewBox="0 0 16 16"><path d="M0.5 1 L3 0 H12 L13.5 1.5 L13 5 H3.5Z" fill="#7a0f3c"/><rect x="3.5" y="2" width="10" height="3.5" fill="#c1177a"/><rect x="5" y="0.8" width="2.5" height="1.5" fill="#d6d000"/>
<path d="M0.5 1.5 L3.5 5 M0.5 6 L3.5 10 M0.5 10.5 L3.5 15" stroke="#333" stroke-width="1.2"/><path d="M0 1.5 L0 5 L3.5 5.5Z M0 6 V10 L3.5 10.5Z M0 10.5 V14 L3.5 15Z" fill="#eee"/>
<rect x="3.5" y="6" width="10" height="4" fill="#1455a8"/><rect x="4.5" y="7" width="8" height="1.5" fill="#3d8de0"/><rect x="3.5" y="11" width="10" height="4" fill="#0c6b3a"/><rect x="4.5" y="12" width="8" height="1.5" fill="#2fd08a"/><rect x="4" y="6" width="1" height="9" fill="#e8e000"/></svg>
<div class="t" style="left:22px;top:173px"><span class="L">R</span><span class="D">-</span><span class="L">patched</span><span class="D">_201</span><span class="P">...</span></div>
<div class="t" style="left:90px;width:103px;text-align:right;top:173px"><span class="D">29,803,713</span></div>
<div class="t" style="left:206px;top:173px"><span class="L">WinRAR</span><span class="S"> </span>压缩<span class="P">...</span></div>
<div class="t" style="left:306px;top:173px"><span class="D">2017/3/21</span><span class="S"> </span><span class="D">9:36:52</span></div>
<svg class="abs" style="left:4px;top:192px" width="16" height="16" viewBox="0 0 16 16"><path d="M3.5 0.5 H12 L15.5 4 V15.5 H3.5Z" fill="#f2f2f2" stroke="#9b4a55"/><path d="M12 0.5 V4 H15.5" fill="#fff" stroke="#aaa" stroke-width="0.7"/><rect x="0" y="2" width="10" height="4" fill="#c0192a"/><rect x="0" y="5" width="10" height="1" fill="#8e0f1c"/>
<path d="M9.8 6 C9 9 7 12 5 13.5 M7 10.5 C9 10 11.5 10.5 14 11.5" stroke="#d01a28" stroke-width="1.4" fill="none"/></svg>
<div class="t" style="left:22px;top:194px"><span class="L">randomforest</span><span class="D">2</span><span class="P">...</span></div>
<div class="t" style="left:90px;width:103px;text-align:right;top:194px"><span class="D">123,819</span></div>
<div class="t" style="left:206px;top:194px"><span class="L">Adobe</span><span class="S"> </span><span class="L">Acrob</span><span class="P">...</span></div>
<div class="t" style="left:306px;top:194px"><span class="D">2017/9/25</span><span class="S"> </span><span class="D">10:57:</span><span class="P">...</span></div>
<svg class="abs" style="left:4px;top:213px" width="16" height="16" viewBox="0 0 16 16"><path d="M3.5 0.5 H12 L15.5 4 V15.5 H3.5Z" fill="#f2f2f2" stroke="#9b4a55"/><path d="M12 0.5 V4 H15.5" fill="#fff" stroke="#aaa" stroke-width="0.7"/><rect x="0" y="2" width="10" height="4" fill="#c0192a"/><rect x="0" y="5" width="10" height="1" fill="#8e0f1c"/>
<path d="M9.8 6 C9 9 7 12 5 13.5 M7 10.5 C9 10 11.5 10.5 14 11.5" stroke="#d01a28" stroke-width="1.4" fill="none"/></svg>
<div class="t" style="left:22px;top:215px"><span class="L">R</span>语言函数手册<span class="P">...</span></div>
<div class="t" style="left:90px;width:103px;text-align:right;top:215px"><span class="D">9,012,196</span></div>
<div class="t" style="left:206px;top:215px"><span class="L">Adobe</span><span class="S"> </span><span class="L">Acrob</span><span class="P">...</span></div>
<div class="t" style="left:306px;top:215px"><span class="D">2017/7/13</span><span class="S"> </span><span class="D">13:49:</span><span class="P">...</span></div>
<svg class="abs" style="left:4px;top:234px" width="16" height="16" viewBox="0 0 16 16"><path d="M3.5 0.5 H12 L15.5 4 V15.5 H3.5Z" fill="#f2f2f2" stroke="#9b4a55"/><path d="M12 0.5 V4 H15.5" fill="#fff" stroke="#aaa" stroke-width="0.7"/><rect x="0" y="2" width="10" height="4" fill="#c0192a"/><rect x="0" y="5" width="10" height="1" fill="#8e0f1c"/>
<path d="M9.8 6 C9 9 7 12 5 13.5 M7 10.5 C9 10 11.5 10.5 14 11.5" stroke="#d01a28" stroke-width="1.4" fill="none"/></svg>
<div class="t" style="left:22px;top:236px"><span class="L">R</span>语言实战（第<span class="D">2</span><span class="P">...</span></div>
<div class="t" style="left:90px;width:103px;text-align:right;top:236px"><span class="D">19,959,091</span></div>
<div class="t" style="left:206px;top:236px"><span class="L">Adobe</span><span class="S"> </span><span class="L">Acrob</span><span class="P">...</span></div>
<div class="t" style="left:306px;top:236px"><span class="D">2017/4/19</span><span class="S"> </span><span class="D">19:43:</span><span class="P">...</span></div>
<svg class="abs" style="left:4px;top:255px" width="16" height="16" viewBox="0 0 16 16"><path d="M0 9 L3 7 H13 L16 9 L13 16 H3Z" fill="#c9975e"/><rect x="2.5" y="1" width="11" height="9" rx="2" transform="rotate(-12 8 5)" fill="#ea4f1e"/><path d="M10.5 3.2 C8 1.8 4.5 3 6.5 5 C8.5 6.5 10.5 7.5 6 8" stroke="#fff" stroke-width="1.5" fill="none"/></svg>
<div class="t" style="left:22px;top:257px"><span class="L">sogou</span><span class="D">_</span><span class="L">pinyin</span><span class="D">_</span><span class="P">...</span></div>
<div class="t" style="left:90px;width:103px;text-align:right;top:257px"><span class="D">43,191,736</span></div>
<div class="t" style="left:206px;top:257px">应用程序</div>
<div class="t" style="left:306px;top:257px"><span class="D">2017/12/5</span><span class="S"> </span><span class="D">10:15:</span><span class="P">...</span></div>
</div>
<div class="abs" style="left:582px;top:464px;width:17px;height:291px;background:#f0f0f0"></div>
<svg class="abs" style="left:586px;top:468px" width="8" height="8"><path d="M0.9 6.3 L4 3 L7.1 6.3" stroke="#606060" stroke-width="2" fill="none"/></svg>
<svg class="abs" style="left:586px;top:743px" width="8" height="8"><path d="M0.9 1.7 L4 5 L7.1 1.7" stroke="#606060" stroke-width="2" fill="none"/></svg>
<div class="abs" style="left:582px;top:511px;width:15px;height:60px;background:#cdcdcd"></div>
<div class="abs" style="left:10px;top:755px;width:588px;height:1px;background:#e3e3e3"></div>
<div class="abs" style="left:597px;top:756px;width:1px;height:24px;background:#dcdcdc"></div>
<div class="t" style="left:12px;top:761px;"><span class="D">46</span><span class="S"> </span>个文件<span class="S"> </span>和<span class="S"> </span><span class="D">4</span><span class="S"> </span>个目录。大小总计<span class="D">:</span><span class="S"> </span><span class="D">1,411,789,038</span><span class="S"> </span>字节</div>
<div class="abs" style="left:604px;top:430px;width:588px;height:351px;background:#f0f0f0;border-top:1px solid #a0a0a0;border-left:1px solid #a0a0a0;border-right:1px solid #fff;border-bottom:1px solid #fff"><div style="position:absolute;left:0;top:0;right:0;bottom:0;border-top:1px solid #696969;border-left:1px solid #696969;border-right:1px solid #e3e3e3;border-bottom:1px solid #e3e3e3"></div></div>
<div class="abs" style="left:606px;top:432px;width:568px;height:323px;background:#fff"></div>
<div class="abs" style="left:685px;top:432px;width:1px;height:23px;background:#e5e5e5"></div>
<div class="abs" style="left:760px;top:432px;width:1px;height:23px;background:#e5e5e5"></div>
<div class="abs" style="left:840px;top:432px;width:1px;height:23px;background:#e5e5e5"></div>
<div class="abs" style="left:940px;top:432px;width:1px;height:23px;background:#e5e5e5"></div>
<div class="abs" style="left:1020px;top:432px;width:1px;height:23px;background:#e5e5e5"></div>
<div class="abs" style="left:1100px;top:432px;width:1px;height:23px;background:#e5e5e5"></div>
<svg class="abs" style="left:641px;top:431px" width="9" height="5"><path d="M0.5 4.5 L4.5 0.5 L8.5 4.5" stroke="#777" stroke-width="1" fill="none"/></svg>
<div class="t" style="left:612px;top:437px;">文件名</div>
<div class="t" style="right:445px;top:437px;text-align:right;">文件大小</div>
<div class="t" style="left:767px;top:437px;">文件类型</div>
<div class="t" style="left:847px;top:437px;">最近修改</div>
<div class="t" style="left:947px;top:437px;">权限</div>
<div class="t" style="left:1027px;top:437px;">所有者<span class="D">/</span>组</div>
<div class="abs" style="left:606px;top:455px;width:568px;height:300px;overflow:hidden">
<svg class="abs" style="left:6px;top:3px" width="14" height="16" viewBox="0 0 14 16"><defs><linearGradient id="fg" x1="0" y1="0" x2="1" y2="1"><stop offset="0" stop-color="#fde7a0"/><stop offset="1" stop-color="#f8d675"/></linearGradient></defs><rect x="0.5" y="0.5" width="11" height="15" fill="url(#fg)" stroke="#e8c25a"/><rect x="10" y="10.5" width="3" height="5" fill="#fbe08a" stroke="#e8c25a" stroke-width="0.8"/></svg>
<div class="t" style="left:22px;top:5px"><span class="P">..</span></div>
<svg class="abs" style="left:6px;top:24px" width="13" height="16" viewBox="0 0 13 16"><path d="M0.6 0.6 H9 L11.9 3.5 V15.4 H0.6Z" fill="#fff" stroke="#8a8a8a" stroke-width="1.2"/><path d="M9 0.6 V3.5 H11.9" fill="#f0f0f0" stroke="#aaa" stroke-width="0.8"/><path d="M3 5.5 L9 4.3 V5.6 L3 6.8Z" fill="#0a6fd8"/><rect x="3" y="7.5" width="6" height="4" fill="#0a6fd8"/></svg>
<div class="t" style="left:22px;top:26px"><span class="D">01</span>一上<span class="P">....</span></div>
<div class="t" style="left:44px;width:105px;text-align:right;top:26px"><span class="D">2,628,51</span><span class="P">...</span></div>
<div class="t" style="left:161px;top:26px"><span class="L">MP</span><span class="D">4</span><span class="S"> </span>文件</div>
<div class="t" style="left:241px;top:26px"><span class="D">2018/2/3</span><span class="S"> </span><span class="D">23:</span><span class="P">...</span></div>
<div class="t" style="left:341px;top:26px"><span class="D">-</span><span class="L">rwxr</span><span class="D">-</span><span class="L">xr</span><span class="D">-</span><span class="L">x</span></div>
<div class="t" style="left:421px;top:26px"><span class="D">0</span><span class="S"> </span><span class="D">0</span></div>
<svg class="abs" style="left:6px;top:45px" width="13" height="16" viewBox="0 0 13 16"><path d="M0.6 0.6 H9 L11.9 3.5 V15.4 H0.6Z" fill="#fff" stroke="#8a8a8a" stroke-width="1.2"/><path d="M9 0.6 V3.5 H11.9" fill="#f0f0f0" stroke="#aaa" stroke-width="0.8"/><path d="M3 5.5 L9 4.3 V5.6 L3 6.8Z" fill="#0a6fd8"/><rect x="3" y="7.5" width="6" height="4" fill="#0a6fd8"/></svg>
<div class="t" style="left:22px;top:47px"><span class="D">02</span>一下<span class="P">....</span></div>
<div class="t" style="left:44px;width:105px;text-align:right;top:47px"><span class="D">3,740,70</span><span class="P">...</span></div>
<div class="t" style="left:161px;top:47px"><span class="L">MP</span><span class="D">4</span><span class="S"> </span>文件</div>
<div class="t" style="left:241px;top:47px"><span class="D">2018/2/3</span><span class="S"> </span><span class="D">23:</span><span class="P">...</span></div>
<div class="t" style="left:341px;top:47px"><span class="D">-</span><span class="L">rwxr</span><span class="D">-</span><span class="L">xr</span><span class="D">-</span><span class="L">x</span></div>
<div class="t" style="left:421px;top:47px"><span class="D">0</span><span class="S"> </span><span class="D">0</span></div>
<svg class="abs" style="left:6px;top:66px" width="13" height="16" viewBox="0 0 13 16"><path d="M0.6 0.6 H9 L11.9 3.5 V15.4 H0.6Z" fill="#fff" stroke="#8a8a8a" stroke-width="1.2"/><path d="M9 0.6 V3.5 H11.9" fill="#f0f0f0" stroke="#aaa" stroke-width="0.8"/><path d="M3 5.5 L9 4.3 V5.6 L3 6.8Z" fill="#0a6fd8"/><rect x="3" y="7.5" width="6" height="4" fill="#0a6fd8"/></svg>
<div class="t" style="left:22px;top:68px"><span class="D">03</span>二上<span class="P">....</span></div>
<div class="t" style="left:44px;width:105px;text-align:right;top:68px"><span class="D">2,381,97</span><span class="P">...</span></div>
<div class="t" style="left:161px;top:68px"><span class="L">MP</span><span class="D">4</span><span class="S"> </span>文件</div>
<div class="t" style="left:241px;top:68px"><span class="D">2018/2/3</span><span class="S"> </span><span class="D">23:</span><span class="P">...</span></div>
<div class="t" style="left:341px;top:68px"><span class="D">-</span><span class="L">rwxr</span><span class="D">-</span><span class="L">xr</span><span class="D">-</span><span class="L">x</span></div>
<div class="t" style="left:421px;top:68px"><span class="D">0</span><span class="S"> </span><span class="D">0</span></div>
<svg class="abs" style="left:6px;top:87px" width="13" height="16" viewBox="0 0 13 16"><path d="M0.6 0.6 H9 L11.9 3.5 V15.4 H0.6Z" fill="#fff" stroke="#8a8a8a" stroke-width="1.2"/><path d="M9 0.6 V3.5 H11.9" fill="#f0f0f0" stroke="#aaa" stroke-width="0.8"/><path d="M3 5.5 L9 4.3 V5.6 L3 6.8Z" fill="#0a6fd8"/><rect x="3" y="7.5" width="6" height="4" fill="#0a6fd8"/></svg>
<div class="t" style="left:22px;top:89px"><span class="D">04</span>二下<span class="P">....</span></div>
<div class="t" style="left:44px;width:105px;text-align:right;top:89px"><span class="D">5,203,35</span><span class="P">...</span></div>
<div class="t" style="left:161px;top:89px"><span class="L">MP</span><span class="D">4</span><span class="S"> </span>文件</div>
<div class="t" style="left:241px;top:89px"><span class="D">2018/2/3</span><span class="S"> </span><span class="D">23:</span><span class="P">...</span></div>
<div class="t" style="left:341px;top:89px"><span class="D">-</span><span class="L">rwxr</span><span class="D">-</span><span class="L">xr</span><span class="D">-</span><span class="L">x</span></div>
<div class="t" style="left:421px;top:89px"><span class="D">0</span><span class="S"> </span><span class="D">0</span></div>
<svg class="abs" style="left:6px;top:108px" width="13" height="16" viewBox="0 0 13 16"><path d="M0.6 0.6 H9 L11.9 3.5 V15.4 H0.6Z" fill="#fff" stroke="#8a8a8a" stroke-width="1.2"/><path d="M9 0.6 V3.5 H11.9" fill="#f0f0f0" stroke="#aaa" stroke-width="0.8"/><path d="M3 5.5 L9 4.3 V5.6 L3 6.8Z" fill="#0a6fd8"/><rect x="3" y="7.5" width="6" height="4" fill="#0a6fd8"/></svg>
<div class="t" style="left:22px;top:110px"><span class="D">05</span>三上<span class="S"> </span><span class="P">....</span></div>
<div class="t" style="left:44px;width:105px;text-align:right;top:110px"><span class="D">1,664,63</span><span class="P">...</span></div>
<div class="t" style="left:161px;top:110px"><span class="L">MP</span><span class="D">4</span><span class="S"> </span>文件</div>
<div class="t" style="left:241px;top:110px"><span class="D">2018/2/3</span><span class="S"> </span><span class="D">23:</span><span class="P">...</span></div>
<div class="t" style="left:341px;top:110px"><span class="D">-</span><span class="L">rwxr</span><span class="D">-</span><span class="L">xr</span><span class="D">-</span><span class="L">x</span></div>
<div class="t" style="left:421px;top:110px"><span class="D">0</span><span class="S"> </span><span class="D">0</span></div>
<svg class="abs" style="left:6px;top:129px" width="13" height="16" viewBox="0 0 13 16"><path d="M0.6 0.6 H9 L11.9 3.5 V15.4 H0.6Z" fill="#fff" stroke="#8a8a8a" stroke-width="1.2"/><path d="M9 0.6 V3.5 H11.9" fill="#f0f0f0" stroke="#aaa" stroke-width="0.8"/><path d="M3 5.5 L9 4.3 V5.6 L3 6.8Z" fill="#0a6fd8"/><rect x="3" y="7.5" width="6" height="4" fill="#0a6fd8"/></svg>
<div class="t" style="left:22px;top:131px"><span class="D">06</span>三下<span class="P">....</span></div>
<div class="t" style="left:44px;width:105px;text-align:right;top:131px"><span class="D">2,847,67</span><span class="P">...</span></div>
<div class="t" style="left:161px;top:131px"><span class="L">MP</span><span class="D">4</span><span class="S"> </span>文件</div>
<div class="t" style="left:241px;top:131px"><span class="D">2018/2/3</span><span class="S"> </span><span class="D">23:</span><span class="P">...</span></div>
<div class="t" style="left:341px;top:131px"><span class="D">-</span><span class="L">rwxr</span><span class="D">-</span><span class="L">xr</span><span class="D">-</span><span class="L">x</span></div>
<div class="t" style="left:421px;top:131px"><span class="D">0</span><span class="S"> </span><span class="D">0</span></div>
<svg class="abs" style="left:6px;top:150px" width="13" height="16" viewBox="0 0 13 16"><path d="M0.6 0.6 H9 L11.9 3.5 V15.4 H0.6Z" fill="#fff" stroke="#8a8a8a" stroke-width="1.2"/><path d="M9 0.6 V3.5 H11.9" fill="#f0f0f0" stroke="#aaa" stroke-width="0.8"/><path d="M3 5.5 L9 4.3 V5.6 L3 6.8Z" fill="#0a6fd8"/><rect x="3" y="7.5" width="6" height="4" fill="#0a6fd8"/></svg>
<div class="t" style="left:22px;top:152px"><span class="D">07</span>四上<span class="P">....</span></div>
<div class="t" style="left:44px;width:105px;text-align:right;top:152px"><span class="D">1,747,93</span><span class="P">...</span></div>
<div class="t" style="left:161px;top:152px"><span class="L">MP</span><span class="D">4</span><span class="S"> </span>文件</div>
<div class="t" style="left:241px;top:152px"><span class="D">2018/2/3</span><span class="S"> </span><span class="D">23:</span><span class="P">...</span></div>
<div class="t" style="left:341px;top:152px"><span class="D">-</span><span class="L">rwxr</span><span class="D">-</span><span class="L">xr</span><span class="D">-</span><span class="L">x</span></div>
<div class="t" style="left:421px;top:152px"><span class="D">0</span><span class="S"> </span><span class="D">0</span></div>
<svg class="abs" style="left:6px;top:171px" width="13" height="16" viewBox="0 0 13 16"><path d="M0.6 0.6 H9 L11.9 3.5 V15.4 H0.6Z" fill="#fff" stroke="#8a8a8a" stroke-width="1.2"/><path d="M9 0.6 V3.5 H11.9" fill="#f0f0f0" stroke="#aaa" stroke-width="0.8"/><path d="M3 5.5 L9 4.3 V5.6 L3 6.8Z" fill="#0a6fd8"/><rect x="3" y="7.5" width="6" height="4" fill="#0a6fd8"/></svg>
<div class="t" style="left:22px;top:173px"><span class="D">08</span>四下<span class="P">....</span></div>
<div class="t" style="left:44px;width:105px;text-align:right;top:173px"><span class="D">2,854,29</span><span class="P">...</span></div>
<div class="t" style="left:161px;top:173px"><span class="L">MP</span><span class="D">4</span><span class="S"> </span>文件</div>
<div class="t" style="left:241px;top:173px"><span class="D">2018/2/3</span><span class="S"> </span><span class="D">23:</span><span class="P">...</span></div>
<div class="t" style="left:341px;top:173px"><span class="D">-</span><span class="L">rwxr</span><span class="D">-</span><span class="L">xr</span><span class="D">-</span><span class="L">x</span></div>
<div class="t" style="left:421px;top:173px"><span class="D">0</span><span class="S"> </span><span class="D">0</span></div>
<svg class="abs" style="left:6px;top:192px" width="13" height="16" viewBox="0 0 13 16"><path d="M0.6 0.6 H9 L11.9 3.5 V15.4 H0.6Z" fill="#fff" stroke="#8a8a8a" stroke-width="1.2"/><path d="M9 0.6 V3.5 H11.9" fill="#f0f0f0" stroke="#aaa" stroke-width="0.8"/><path d="M3 5.5 L9 4.3 V5.6 L3 6.8Z" fill="#0a6fd8"/><rect x="3" y="7.5" width="6" height="4" fill="#0a6fd8"/></svg>
<div class="t" style="left:22px;top:194px"><span class="D">09</span>五上<span class="P">....</span></div>
<div class="t" style="left:44px;width:105px;text-align:right;top:194px"><span class="D">2,902,22</span><span class="P">...</span></div>
<div class="t" style="left:161px;top:194px"><span class="L">MP</span><span class="D">4</span><span class="S"> </span>文件</div>
<div class="t" style="left:241px;top:194px"><span class="D">2018/2/3</span><span class="S"> </span><span class="D">23:</span><span class="P">...</span></div>
<div class="t" style="left:341px;top:194px"><span class="D">-</span><span class="L">rwxr</span><span class="D">-</span><span class="L">xr</span><span class="D">-</span><span class="L">x</span></div>
<div class="t" style="left:421px;top:194px"><span class="D">0</span><span class="S"> </span><span class="D">0</span></div>
<svg class="abs" style="left:6px;top:213px" width="13" height="16" viewBox="0 0 13 16"><path d="M0.6 0.6 H9 L11.9 3.5 V15.4 H0.6Z" fill="#fff" stroke="#8a8a8a" stroke-width="1.2"/><path d="M9 0.6 V3.5 H11.9" fill="#f0f0f0" stroke="#aaa" stroke-width="0.8"/><path d="M3 5.5 L9 4.3 V5.6 L3 6.8Z" fill="#0a6fd8"/><rect x="3" y="7.5" width="6" height="4" fill="#0a6fd8"/></svg>
<div class="t" style="left:22px;top:215px"><span class="D">10</span>五下<span class="P">....</span></div>
<div class="t" style="left:44px;width:105px;text-align:right;top:215px"><span class="D">2,749,77</span><span class="P">...</span></div>
<div class="t" style="left:161px;top:215px"><span class="L">MP</span><span class="D">4</span><span class="S"> </span>文件</div>
<div class="t" style="left:241px;top:215px"><span class="D">2018/2/3</span><span class="S"> </span><span class="D">23:</span><span class="P">...</span></div>
<div class="t" style="left:341px;top:215px"><span class="D">-</span><span class="L">rwxr</span><span class="D">-</span><span class="L">xr</span><span class="D">-</span><span class="L">x</span></div>
<div class="t" style="left:421px;top:215px"><span class="D">0</span><span class="S"> </span><span class="D">0</span></div>
<svg class="abs" style="left:6px;top:234px" width="13" height="16" viewBox="0 0 13 16"><path d="M0.6 0.6 H9 L11.9 3.5 V15.4 H0.6Z" fill="#fff" stroke="#8a8a8a" stroke-width="1.2"/><path d="M9 0.6 V3.5 H11.9" fill="#f0f0f0" stroke="#aaa" stroke-width="0.8"/><path d="M3 5.5 L9 4.3 V5.6 L3 6.8Z" fill="#0a6fd8"/><rect x="3" y="7.5" width="6" height="4" fill="#0a6fd8"/></svg>
<div class="t" style="left:22px;top:236px"><span class="D">11</span>六上<span class="P">....</span></div>
<div class="t" style="left:44px;width:105px;text-align:right;top:236px"><span class="D">2,642,77</span><span class="P">...</span></div>
<div class="t" style="left:161px;top:236px"><span class="L">MP</span><span class="D">4</span><span class="S"> </span>文件</div>
<div class="t" style="left:241px;top:236px"><span class="D">2018/2/3</span><span class="S"> </span><span class="D">23:</span><span class="P">...</span></div>
<div class="t" style="left:341px;top:236px"><span class="D">-</span><span class="L">rwxr</span><span class="D">-</span><span class="L">xr</span><span class="D">-</span><span class="L">x</span></div>
<div class="t" style="left:421px;top:236px"><span class="D">0</span><span class="S"> </span><span class="D">0</span></div>
<svg class="abs" style="left:6px;top:255px" width="13" height="16" viewBox="0 0 13 16"><path d="M0.6 0.6 H9 L11.9 3.5 V15.4 H0.6Z" fill="#fff" stroke="#8a8a8a" stroke-width="1.2"/><path d="M9 0.6 V3.5 H11.9" fill="#f0f0f0" stroke="#aaa" stroke-width="0.8"/><path d="M3 5.5 L9 4.3 V5.6 L3 6.8Z" fill="#0a6fd8"/><rect x="3" y="7.5" width="6" height="4" fill="#0a6fd8"/></svg>
<div class="t" style="left:22px;top:257px"><span class="D">12</span>六下<span class="P">....</span></div>
<div class="t" style="left:44px;width:105px;text-align:right;top:257px"><span class="D">4,581,17</span><span class="P">...</span></div>
<div class="t" style="left:161px;top:257px"><span class="L">MP</span><span class="D">4</span><span class="S"> </span>文件</div>
<div class="t" style="left:241px;top:257px"><span class="D">2018/2/3</span><span class="S"> </span><span class="D">23:</span><span class="P">...</span></div>
<div class="t" style="left:341px;top:257px"><span class="D">-</span><span class="L">rwxr</span><span class="D">-</span><span class="L">xr</span><span class="D">-</span><span class="L">x</span></div>
<div class="t" style="left:421px;top:257px"><span class="D">0</span><span class="S"> </span><span class="D">0</span></div>
<svg class="abs" style="left:6px;top:276px" width="13" height="16" viewBox="0 0 13 16"><path d="M0.6 0.6 H9 L11.9 3.5 V15.4 H0.6Z" fill="#fff" stroke="#8a8a8a" stroke-width="1.2"/><path d="M9 0.6 V3.5 H11.9" fill="#f0f0f0" stroke="#aaa" stroke-width="0.8"/><path d="M3 5.5 L9 4.3 V5.6 L3 6.8Z" fill="#0a6fd8"/><rect x="3" y="7.5" width="6" height="4" fill="#0a6fd8"/></svg>
<div class="t" style="left:22px;top:278px"><span class="D">13</span>七上<span class="P">....</span></div>
<div class="t" style="left:44px;width:105px;text-align:right;top:278px"><span class="D">3,014,63</span><span class="P">...</span></div>
<div class="t" style="left:161px;top:278px"><span class="L">MP</span><span class="D">4</span><span class="S"> </span>文件</div>
<div class="t" style="left:241px;top:278px"><span class="D">2018/2/3</span><span class="S"> </span><span class="D">23:</span><span class="P">...</span></div>
<div class="t" style="left:341px;top:278px"><span class="D">-</span><span class="L">rwxr</span><span class="D">-</span><span class="L">xr</span><span class="D">-</span><span class="L">x</span></div>
<div class="t" style="left:421px;top:278px"><span class="D">0</span><span class="S"> </span><span class="D">0</span></div>
<svg class="abs" style="left:6px;top:297px" width="13" height="16" viewBox="0 0 13 16"><path d="M0.6 0.6 H9 L11.9 3.5 V15.4 H0.6Z" fill="#fff" stroke="#8a8a8a" stroke-width="1.2"/><path d="M9 0.6 V3.5 H11.9" fill="#f0f0f0" stroke="#aaa" stroke-width="0.8"/><path d="M3 5.5 L9 4.3 V5.6 L3 6.8Z" fill="#0a6fd8"/><rect x="3" y="7.5" width="6" height="4" fill="#0a6fd8"/></svg>
<div class="t" style="left:22px;top:299px"><span class="D">14</span>七下<span class="P">....</span></div>
<div class="t" style="left:44px;width:105px;text-align:right;top:299px"><span class="D">3,100,00</span><span class="P">...</span></div>
<div class="t" style="left:161px;top:299px"><span class="L">MP</span><span class="D">4</span><span class="S"> </span>文件</div>
<div class="t" style="left:241px;top:299px"><span class="D">2018/2/3</span><span class="S"> </span><span class="D">23:</span><span class="P">...</span></div>
<div class="t" style="left:341px;top:299px"><span class="D">-</span><span class="L">rwxr</span><span class="D">-</span><span class="L">xr</span><span class="D">-</span><span class="L">x</span></div>
<div class="t" style="left:421px;top:299px"><span class="D">0</span><span class="S"> </span><span class="D">0</span></div>
</div>
<div class="abs" style="left:1174px;top:432px;width:17px;height:323px;background:#f0f0f0"></div>
<svg class="abs" style="left:1178px;top:437px" width="8" height="8"><path d="M0.9 6.3 L4 3 L7.1 6.3" stroke="#606060" stroke-width="2" fill="none"/></svg>
<svg class="abs" style="left:1178px;top:743px" width="8" height="8"><path d="M0.9 1.7 L4 5 L7.1 1.7" stroke="#606060" stroke-width="2" fill="none"/></svg>
<div class="abs" style="left:1174px;top:449px;width:15px;height:253px;background:#cdcdcd"></div>
<div class="abs" style="left:606px;top:755px;width:584px;height:1px;background:#e3e3e3"></div>
<div class="t" style="left:608px;top:761px;">选择了<span class="S"> </span><span class="D">1</span><span class="S"> </span>个文件。大小总共<span class="D">:</span><span class="S"> </span><span class="D">3,515,184</span><span class="S"> </span>字节</div>
<div class="abs" style="left:8px;top:785px;width:1184px;height:103px;background:#fff;border-top:1px solid #a0a0a0;border-left:1px solid #a0a0a0;border-right:1px solid #fff;border-bottom:1px solid #fff"><div style="position:absolute;left:0;top:0;right:0;bottom:0;border-top:1px solid #696969;border-left:1px solid #696969;border-right:1px solid #e3e3e3;border-bottom:1px solid #e3e3e3"></div></div>
<div class="abs" style="left:190px;top:788px;width:1px;height:23px;background:#e5e5e5"></div>
<div class="abs" style="left:249px;top:788px;width:1px;height:23px;background:#e5e5e5"></div>
<div class="abs" style="left:429px;top:788px;width:1px;height:23px;background:#e5e5e5"></div>
<div class="abs" style="left:509px;top:788px;width:1px;height:23px;background:#e5e5e5"></div>
<div class="abs" style="left:569px;top:788px;width:1px;height:23px;background:#e5e5e5"></div>
<div class="abs" style="left:719px;top:788px;width:1px;height:23px;background:#e5e5e5"></div>
<div class="t" style="left:16px;top:793px;">服务器<span class="D">/</span>本地文件</div>
<div class="t" style="left:208px;top:793px;">方向</div>
<div class="t" style="left:256px;top:793px;">远程文件</div>
<div class="t" style="right:697px;top:793px;text-align:right;">大小</div>
<div class="t" style="left:516px;top:793px;">优先级</div>
<div class="t" style="left:576px;top:793px;">状态</div>
<div class="abs" style="left:8px;top:886px;width:1184px;height:1px;background:#a0a0a0"></div><div class="abs" style="left:8px;top:887px;width:1184px;height:1px;background:#6e6e6e"></div>
<div class="abs" style="left:8px;top:888px;width:1183px;height:29px;background:linear-gradient(#d2d2d2,#eeeeee 85%)"></div>
<div class="abs" style="left:8px;top:917px;width:1183px;height:1px;background:#dadada"></div>
<div class="abs" style="left:118px;top:891px;width:84px;height:23px;background:linear-gradient(#e6e6e6,#dcdcdc);border:1px solid #a8a8a8;border-top:none;border-radius:0 0 3px 3px"></div>
<div class="t" style="left:125px;top:894px;">传输失败<span class="S"> </span>(<span class="D">1</span>)</div>
<div class="abs" style="left:203px;top:891px;width:97px;height:23px;background:linear-gradient(#e6e6e6,#dcdcdc);border:1px solid #a8a8a8;border-top:none;border-radius:0 0 3px 3px"></div>
<div class="t" style="left:210px;top:894px;">成功的传输<span class="S"> </span>(<span class="D">4</span>)</div>
<div class="abs" style="left:13px;top:891px;width:105px;height:23px;background:linear-gradient(#ffffff 60%,#ebebeb);border:1px solid #a8a8a8;border-top:none;border-radius:0 0 3px 3px"></div>
<div class="t" style="left:20px;top:894px;font-weight:bold;">列队的文件</div>
<svg class="abs" style="left:955px;top:922px" width="17" height="16" viewBox="0 0 17 16"><path d="M4 7 V4.5 A4.5 4.5 0 0 1 13 4.5 V7" stroke="#666" stroke-width="1.8" fill="none"/><rect x="0.5" y="7" width="16" height="9" rx="1" fill="#f5b400"/><rect x="0.5" y="12" width="16" height="4" fill="#e0a000"/><circle cx="8.5" cy="10.5" r="1.3" fill="#333"/><rect x="8" y="10.5" width="1" height="3" fill="#333"/></svg>
<svg class="abs" style="left:975px;top:922px" width="16" height="16" viewBox="0 0 16 16"><circle cx="8" cy="8" r="6" fill="none" stroke="#555" stroke-width="3" stroke-dasharray="2.2 1.4"/><circle cx="8" cy="8" r="5" fill="#fff" stroke="#555" stroke-width="1.3"/><text x="8" y="11" font-size="8" font-weight="bold" text-anchor="middle" fill="#2ecc40" font-family="Liberation Sans">A</text></svg>
<svg class="abs" style="left:994px;top:922px" width="16" height="16" viewBox="0 0 16 16"><circle cx="8" cy="8" r="7.3" fill="#e8e8e8" stroke="#666" stroke-width="1.2"/><circle cx="8" cy="8" r="5" fill="#fff" stroke="#888" stroke-width="1"/><path d="M8 8 L11 4.5" stroke="#444" stroke-width="1.2"/></svg>
<div class="t" style="left:1018px;top:923px;">队列<span class="D">:</span><span class="S"> </span>空</div>
<div class="abs" style="left:1138px;top:920px;width:1px;height:21px;background:#d0d0d0"></div>
<div class="abs" style="left:1147px;top:925px;width:10px;height:10px;border-radius:50%;background:radial-gradient(circle at 45% 40%,#2f6f2f,#063306 70%);box-shadow:0 0 0 1px #d0d0d0"></div>
<div class="abs" style="left:1161px;top:925px;width:10px;height:10px;border-radius:50%;background:radial-gradient(circle at 45% 40%,#8a1a1a,#420404 70%);box-shadow:0 0 0 1px #d0d0d0"></div>
<div class="abs" style="left:1187px;top:932px;width:2px;height:2px;background:#b8b8b8"></div>
<div class="abs" style="left:1184px;top:935px;width:2px;height:2px;background:#b8b8b8"></div>
<div class="abs" style="left:1187px;top:935px;width:2px;height:2px;background:#b8b8b8"></div>
<div class="abs" style="left:1181px;top:938px;width:2px;height:2px;background:#b8b8b8"></div>
<div class="abs" style="left:1184px;top:938px;width:2px;height:2px;background:#b8b8b8"></div>
<div class="abs" style="left:1187px;top:938px;width:2px;height:2px;background:#b8b8b8"></div>
</body></html>
